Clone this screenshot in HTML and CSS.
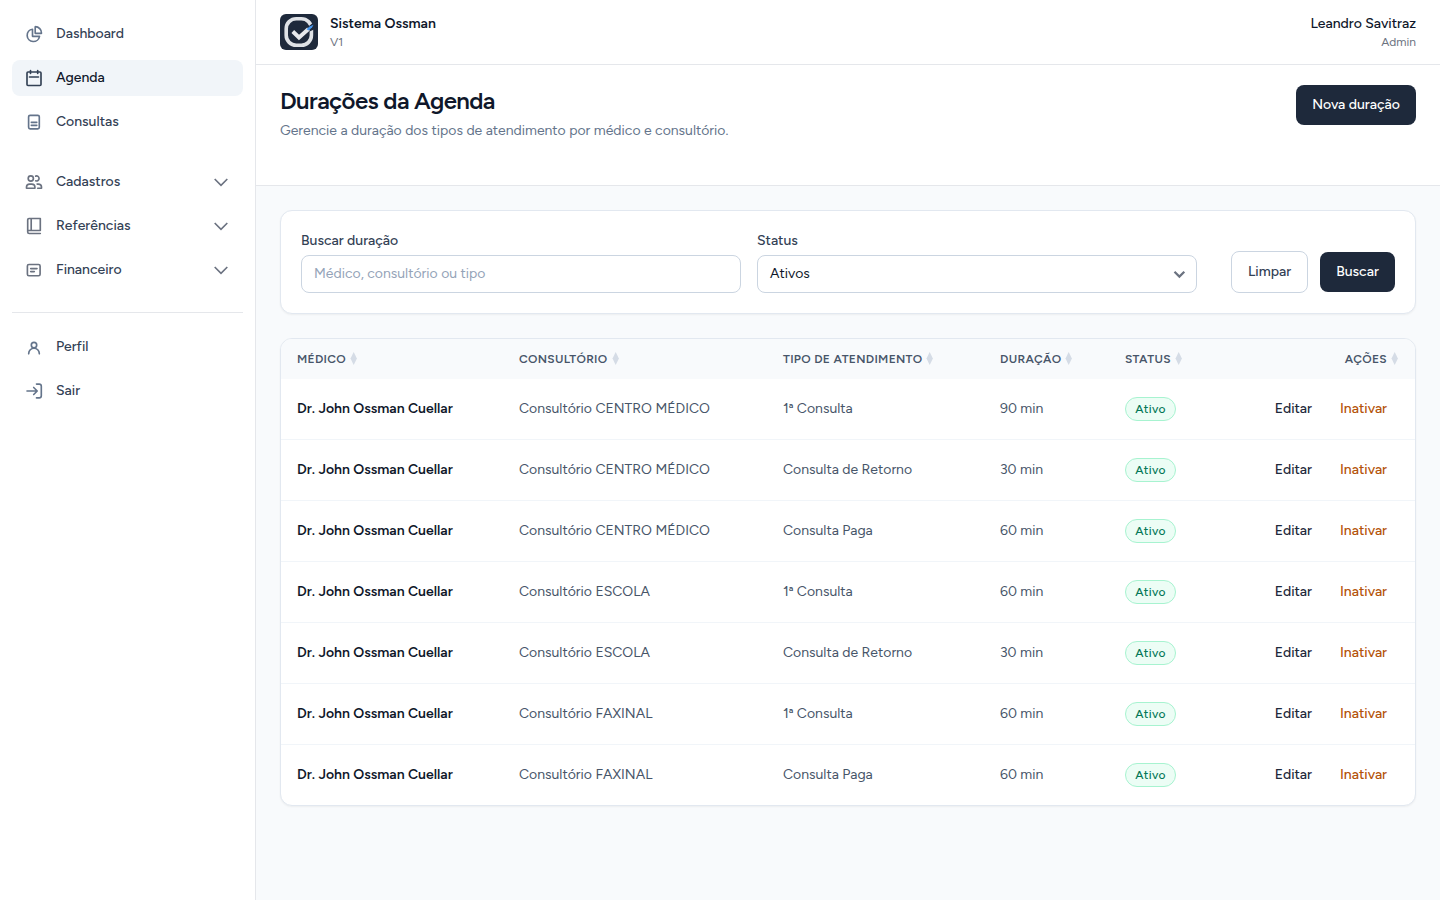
FILE: index.html
```html
<!DOCTYPE html>
<html lang="pt-BR">
<head>
<meta charset="utf-8">
<title>Durações da Agenda</title>
<link rel="stylesheet" href="styles.css">
</head>
<body>
<div class="app">
  <aside class="sidebar">
    <nav class="group">
      <a class="item"><svg class="icon" viewBox="0 0 24 24"><path d="M10.500 7.200a6.200 6.200 0 1 0 7 7.100h-7z"/><path d="M13.200 4.700v6.600h6.300a6.300 6.300 0 0 0-6.300-6.600z"/></svg><span>Dashboard</span></a>
      <a class="item active"><svg class="icon" viewBox="0 0 24 24"><rect x="5" y="6" width="14" height="13.500" rx="1"/><path d="M8.500 4.500v3M15.700 4.500v3M7.500 11h9"/></svg><span>Agenda</span></a>
      <a class="item"><svg class="icon" viewBox="0 0 24 24"><rect x="6.600" y="5.300" width="10.700" height="13.500" rx="1.500"/><path d="M9.300 12.300h5.500M9.300 15.300h5.500"/></svg><span>Consultas</span></a>
    </nav>
    <nav class="group menus">
      <a class="item"><svg class="icon" viewBox="0 0 24 24"><circle cx="8.800" cy="8.500" r="2.600"/><path d="M13.700 6.100a2.500 2.500 0 1 1 0 4.700M4.500 18.200v-1.100c0-1.900 1.300-3 3.200-3h2c1.900 0 3.200 1.100 3.200 3v1.100zM15.100 14.100h1.100c2 0 3.300 1.100 3.300 3v1.100h-3.800"/></svg><span>Cadastros</span><svg class="chev" viewBox="0 0 16 16"><path d="M1.700 5 8 11.300 14.300 5"/></svg></a>
      <a class="item"><svg class="icon" viewBox="0 0 24 24"><path d="M18.300 16.500V4.500H7A1.300 1.300 0 0 0 5.700 5.800v12.100c0 1 .5 1.600 1.500 1.600h11.100M5.700 16.500h12.600M9.200 4.500v12"/></svg><span>Referências</span><svg class="chev" viewBox="0 0 16 16"><path d="M1.700 5 8 11.300 14.300 5"/></svg></a>
      <a class="item"><svg class="icon" viewBox="0 0 24 24"><rect x="5.400" y="6.500" width="12.700" height="11.200" rx="1.500"/><path d="M8.700 10.600h6.300M8.700 13.600h3.600"/></svg><span>Financeiro</span><svg class="chev" viewBox="0 0 16 16"><path d="M1.700 5 8 11.300 14.300 5"/></svg></a>
    </nav>
    <nav class="group account">
      <a class="item"><svg class="icon" viewBox="0 0 24 24"><circle cx="12" cy="10" r="2.700"/><path d="M6.700 18.800v-.3a5.300 5.300 0 0 1 10.600 0v.3"/></svg><span>Perfil</span></a>
      <a class="item"><svg class="icon" viewBox="0 0 24 24"><path d="M5 12h10M11.700 8.500 15.200 12l-3.500 3.500M14.500 5.100h2.700c1.400 0 2.100.7 2.100 2.100v9.600c0 1.400-.7 2.100-2.100 2.100h-2.700"/></svg><span>Sair</span></a>
    </nav>
  </aside>
  <main class="main">
    <header class="topbar">
      <div class="brand">
        <svg class="logo" viewBox="0 0 38 36"><rect width="38" height="36" rx="6" fill="#1e293b"/><rect x="6.200" y="4.700" width="25.200" height="26.600" rx="10" fill="none" stroke="#dfe2e6" stroke-width="3.600"/><path d="M26.500 14 34 8v7.500l-4.500 2z" fill="#1e293b"/><path d="m12.800 17.500 6.200 6 9.500-8.500" fill="none" stroke="#e7e9ec" stroke-width="3.900"/><path d="m26.500 15.300 3-2.800 4-1.800-1.300 2.500-3.500 3.300z" fill="#4797ef"/></svg>
        <div><div class="strong">Sistema Ossman</div><div class="small">V1</div></div>
      </div>
      <div class="user"><div class="name">Leandro Savitraz</div><div class="small">Admin</div></div>
    </header>
    <section class="heading">
      <div><h1>Durações da Agenda</h1><p>Gerencie a duração dos tipos de atendimento por médico e consultório.</p></div>
      <button class="btn dark new">Nova duração</button>
    </section>
    <div class="content">
      <form class="card filters">
        <label class="field"><span>Buscar duração</span><span class="control hint">Médico, consultório ou tipo</span></label>
        <label class="field"><span>Status</span><span class="control select"><span>Ativos</span><svg class="caret" viewBox="0 0 16 16"><path d="m3.500 5.700 4.900 4.900 4.900-4.900"/></svg></span></label>
        <div class="actions"><button type="button" class="btn light">Limpar</button><button type="button" class="btn dark search">Buscar</button></div>
      </form>
      <div class="card list">
        <table>
          <colgroup><col class="c1"><col class="c2"><col class="c3"><col class="c4"><col class="c5"></colgroup>
          <thead><tr id="head"></tr></thead>
          <tbody id="rows"></tbody>
        </table>
      </div>
    </div>
  </main>
</div>
<script src="app.js"></script>
</body>
</html>
```
FILE: app.js
```
const sort = '<svg class="sort" viewBox="0 0 8 13"><path d="M3.700 0 6.900 6.500 3.700 13 .5 6.500z"/></svg>';
document.getElementById('head').innerHTML =
  ['Médico', 'Consultório', 'Tipo de atendimento', 'Duração', 'Status', 'Ações']
    .map((t, i) => `<th><div class="th h${i}"><span>${t}</span>${sort}</div></th>`).join('');

const rows = [
  ['CENTRO MÉDICO', '1ª Consulta', 90],
  ['CENTRO MÉDICO', 'Consulta de Retorno', 30],
  ['CENTRO MÉDICO', 'Consulta Paga', 60],
  ['ESCOLA', '1ª Consulta', 60],
  ['ESCOLA', 'Consulta de Retorno', 30],
  ['FAXINAL', '1ª Consulta', 60],
  ['FAXINAL', 'Consulta Paga', 60]
];
document.getElementById('rows').innerHTML = rows.map(([room, type, min]) => `<tr>
  <td class="doctor">Dr. John Ossman Cuellar</td>
  <td>Consultório ${room}</td>
  <td>${type}</td>
  <td>${min} min</td>
  <td><span class="badge">Ativo</span></td>
  <td><div class="row-actions"><a class="edit">Editar</a><a class="off">Inativar</a></div></td>
</tr>`).join('');
```
FILE: styles.css
```css
* { box-sizing: border-box; }
body { margin: 0; font: 14px/20px Figtree, Lato, "Open Sans", sans-serif; color: #334155; background: #f8fafc; -webkit-font-smoothing: antialiased; }
.app { display: flex; height: 900px; overflow: hidden; }
.sidebar { width: 256px; flex: none; padding: 16px 12px; background: #fff; border-right: 1px solid #e5e7eb; }
.group { display: flex; flex-direction: column; gap: 8px; margin-bottom: 24px; }
.account { border-top: 1px solid #e5e7eb; padding-top: 16px; }
.item { display: flex; align-items: center; height: 36px; padding: 0 14px 0 10px; border-radius: 8px; font-weight: 500; }
.item span { margin-left: 10px; flex: 1; padding-bottom: 1px; }
.item.active { background: #f1f5f9; color: #0f172a; }
.icon { width: 24px; height: 24px; fill: none; stroke: #64748b; stroke-width: 1.650; stroke-linejoin: round; stroke-linecap: round; }
.menus .icon { stroke: #6b7280; }
.active .icon { stroke: #334155; }
.chev { width: 16px; height: 16px; fill: none; stroke: #6b7280; stroke-width: 1.650; }
.main { flex: 1; }
.topbar { height: 65px; padding: 0 24px; background: #fff; border-bottom: 1px solid #e5e7eb; display: flex; justify-content: space-between; align-items: center; }
.brand { display: flex; align-items: center; gap: 12px; }
.logo { width: 38px; height: 36px; display: block; }
.strong, .name { color: #0f172a; font-weight: 600; line-height: 20px; }
.name { font-weight: 500; }
.small { color: #6b7280; font-size: 12px; line-height: 16px; padding-bottom: 1px; }
.user { text-align: right; }
.heading { height: 121px; padding: 20px 24px; background: #fff; border-bottom: 1px solid #e5e7eb; display: flex; justify-content: space-between; align-items: flex-start; }
h1 { margin: 0; font-size: 24px; line-height: 32px; font-weight: 600; letter-spacing: -.6px; color: #0f172a; }
p { margin: 4px 0 0; color: #64748b; }
.btn { height: 40px; border: 0; border-radius: 8px; padding: 0; font: inherit; font-weight: 500; }
.dark { background: #1e293b; color: #fff; }
.new { width: 120px; }
.search { width: 75px; }
.light { width: 77px; height: 42px; background: #fff; border: 1px solid #cbd5e1; color: #334155; }
.content { padding: 24px; display: flex; flex-direction: column; gap: 24px; }
.card { background: #fff; border: 1px solid #e2e8f0; border-radius: 12px; box-shadow: 0 1px 2px rgba(0,0,0,.05); }
.filters { height: 104px; padding: 20px; display: flex; gap: 16px; }
.field { width: 440px; font-weight: 500; }
.field > span:first-child { display: block; height: 24px; line-height: 19px; }
.control { display: flex; align-items: center; height: 38px; border: 1px solid #cbd5e1; border-radius: 8px; padding: 0 9px 0 12px; font-weight: 400; }
.hint { color: #94a3b8; }
.select { justify-content: space-between; color: #0f172a; }
.caret { width: 16px; height: 16px; fill: none; stroke: #6b7280; stroke-width: 2.200; }
.actions { flex: 1; display: flex; justify-content: flex-end; align-items: center; gap: 12px; padding-top: 20px; }
.list { overflow: hidden; }
table { width: 100%; table-layout: fixed; border-collapse: separate; border-spacing: 0; }
.c1 { width: 222px; } .c2 { width: 264px; } .c3 { width: 217px; } .c4 { width: 125px; } .c5 { width: 110px; }
th { height: 40px; padding: 0 16px; background: #f8fafc; color: #475569; font-size: 12px; line-height: 16px; font-weight: 600; text-transform: uppercase; letter-spacing: .3px; }
.th { display: flex; align-items: center; gap: 4px; }
.th.h5 { justify-content: flex-end; }
.sort { width: 8px; height: 13px; margin-bottom: 1px; fill: #d5dce6; }
td { height: 61px; padding: 0 16px 1px; border-bottom: 1px solid #f1f5f9; color: #475569; }
tr:last-child td { height: 60px; border-bottom: 0; }
.doctor { color: #0f172a; font-weight: 600; white-space: nowrap; }
.badge { display: block; width: 51px; height: 24px; border: 1px solid #a7f3d0; border-radius: 12px; background: #ecfdf5; color: #047857; font-size: 12px; line-height: 22px; font-weight: 500; text-align: center; letter-spacing: .3px; }
.row-actions { display: flex; justify-content: flex-end; gap: 28px; padding-right: 12px; font-weight: 500; color: #1e293b; }
.off { color: #b45309; }
```
